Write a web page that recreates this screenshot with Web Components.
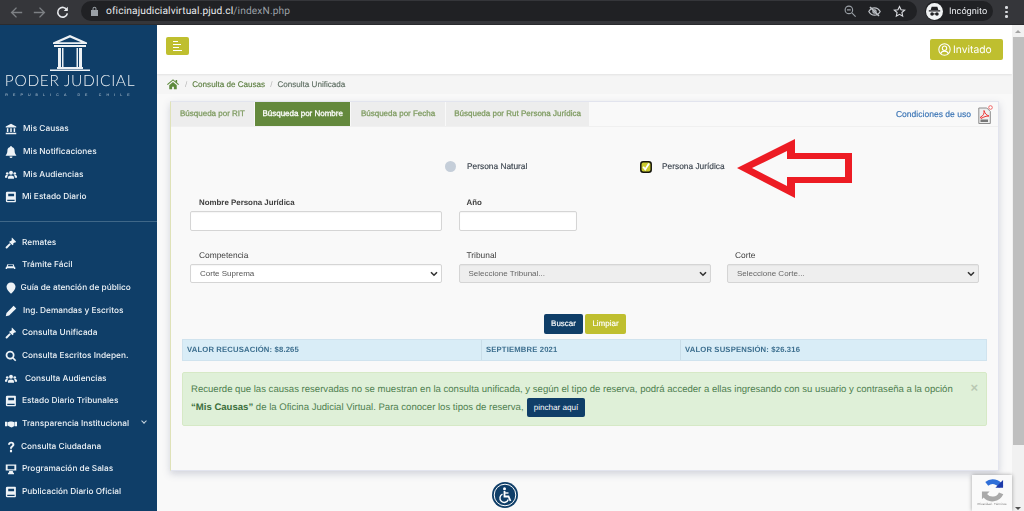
<!DOCTYPE html>
<html lang="es">
<head>
<meta charset="utf-8">
<title>Oficina Judicial Virtual</title>
<style>
  html, body { margin: 0; height: 511px; overflow: hidden; background: #f9f9f9; }
  body { font-family: "Liberation Sans", Arial, sans-serif; text-rendering: geometricPrecision; }
  app-shell { filter: blur(.3px); }
</style>
</head>
<body>
<app-shell>
  <browser-bar slot="top"></browser-bar>
  <side-nav slot="side"></side-nav>
  <top-bar slot="main"></top-bar>
  <crumb-bar slot="main"></crumb-bar>
  <search-card slot="main"></search-card>
  <access-button slot="main"></access-button>
</app-shell>

<script>
(function() {
  'use strict';

  // Small helper so every element gets an open shadow root with its own styles
  class Base extends HTMLElement {
    constructor() {
      super();
      this.attachShadow({ mode: 'open' });
      this.shadowRoot.innerHTML = `<style>${this.css()}</style>${this.html()}`;
    }
    css() { return ':host{display:block}'; }
    html() { return '<slot></slot>'; }
  }

  const ICONS = {
    bank: '<path d="M8 1 1 4.500V6h14V4.500zM2.500 7v5h2V7zm4.500 0v5h2V7zm4.500 0v5h2V7zM1 13v2h14v-2z"/>',
    bell: '<path d="M8 0a1.200 1.200 0 0 0-1.200 1.300C4.400 1.900 3.200 3.800 3.200 6c0 4-1.200 5-2.200 6.200V13h14v-.8C14 11 12.800 10 12.800 6c0-2.200-1.200-4.100-3.600-4.700A1.200 1.200 0 0 0 8 0zM6 14a2 2 0 0 0 4 0z"/>',
    users: '<circle cx="8" cy="5" r="2.600"/><circle cx="3" cy="6" r="1.800"/><circle cx="13" cy="6" r="1.800"/><path d="M4 13v-1.500C4 9.500 5.500 8.500 8 8.500s4 1 4 3V13zM0 11.500V10c0-1.200 1-2 2.600-2 .6 0 1 .1 1.300.3C3.200 9 2.900 10 2.900 11.500zM16 11.500V10c0-1.200-1-2-2.600-2-.6 0-1 .1-1.300.3.700.7 1 1.700 1 3.200z"/>',
    book: '<path d="M3 1h10.500a1 1 0 0 1 1 1v12a1 1 0 0 1-1 1H3a1.800 1.800 0 0 1-1.800-1.800V2.800A1.800 1.800 0 0 1 3 1zm1.300 2.500v3.500h7.800V3.500zM3 11.800v1.500h9.800v-1.500z" fill-rule="evenodd"/>',
    gavel: '<path d="m9.200.8 5.600 5.600-1.400 1.400-.8-.5-1.800 1.800.6.600-1.400 1.400-4.500-4.500 1.400-1.400.6.600L9.300 4l-.5-.8zM6 8.200l1.800 1.800-4.700 5a1.300 1.300 0 0 1-1.900-1.900z"/>',
    car: '<path d="M4 9 5 7h6l1 2zM2 10l1.500-4h9L14 10l1 1v2h-2v-1H3v1H1v-2z" fill-rule="evenodd"/>',
    pin: '<path d="M8 .500C4.500.500 2 3 2 6.300c0 3.400 3.200 7 6 9.200 2.800-2.200 6-5.800 6-9.200C14 3 11.500.500 8 .500z"/>',
    pen: '<path d="m11.500 1 3.500 3.500L5.500 14 1 15l1-4.500z"/>',
    search: '<path d="M6.800 1a5.800 5.800 0 1 0 3.300 10.500l3.400 3.500 1.500-1.500-3.400-3.400A5.800 5.800 0 0 0 6.800 1zm0 2.200a3.500 3.500 0 1 1 0 7.100 3.500 3.500 0 0 1 0-7.100z" fill-rule="evenodd"/>',
    shake: '<path d="M0 5h3v6H0zM13 5h3v6h-3zM3.500 5.500 6.500 4.500h3l3 1v5l-3.500 2-2-.5-3.500-2z"/>',
    help: '<path d="M4 5c0-2.500 2-4 4.300-4C10.800 1 12.500 2.500 12.500 4.700c0 1.800-1 2.600-2.200 3.500-.8.600-1 1-1 2H6.700c0-1.800.5-2.600 1.700-3.500.9-.7 1.400-1.100 1.400-2 0-.9-.7-1.400-1.500-1.400-1 0-1.600.7-1.600 1.700zM6.600 11.500h2.800V15H6.600z"/>',
    screen: '<path d="M1 2h14v8H1zm2.500 1.800v4.500h9V3.800zM5.500 10.500h5V12l1.500 1.500V15H4v-1.500L5.500 12z" fill-rule="evenodd"/>',
    home: '<path d="M8 1.500 0 8.300l1 1.100 7-6 7 6 1-1.100-2.500-2.100V2.500h-2v2zM3 9.700V15h3.800v-3.500h2.400V15H13V9.700L8 5.400z"/>'
  };
  const icon = (name, size) => `<svg width="${size}" height="${size}" viewBox="0 0 16 16" fill="currentColor" aria-hidden="true">${ICONS[name]}</svg>`;

  class AppShell extends Base {
    css() { return `
      :host { display: grid; grid-template: 25px 486px / 157px 855px 12px; width: 1024px; height: 511px; overflow: hidden; position: relative; }
      .top { grid-column: 1 / -1; }
      .main { display: flex; flex-direction: column; overflow: hidden; background: #f9f9f9; }
      .scroll { background: #f1f1f1; display: flex; flex-direction: column; align-items: center; }
      .scroll i { display: block; flex: none; }
      .up { width: 0; height: 0; margin: 5px 0 4px; border: 3px solid transparent; border-top: 0; border-bottom: 3px solid #a3a3a3; }
      .thumb { width: 100%; height: 408px; background: #bfbfbf; margin-left: 1px; }
      .down { width: 0; height: 0; margin-top: auto; margin-bottom: 1px; border: 3px solid transparent; border-bottom: 0; border-top: 3px solid #505050; }
      recaptcha-badge { position: absolute; left: 972px; top: 475px; }
    `; }
    html() { return `
      <div class="top"><slot name="top"></slot></div>
      <slot name="side"></slot>
      <div class="main"><slot name="main"></slot></div>
      <div class="scroll"><i class="up"></i><i class="thumb"></i><i class="down"></i></div>
      <recaptcha-badge></recaptcha-badge>
    `; }
  }

  class BrowserBar extends Base {
    css() { return `
      :host { display: flex; align-items: center; height: 25px; box-sizing: border-box; background: #35363a; border-bottom: 1px solid #2a2b2e; font: 10px "Roboto", sans-serif; color: #e8eaed; }
      svg { display: block; flex: none; }
      .nav { display: flex; align-items: center; gap: 10px; padding-left: 10px; width: 71px; }
      .omni { flex: none; width: 836px; height: 20px; margin-top: -2px; background: #202124; border-radius: 10px; display: flex; align-items: center; box-sizing: border-box; padding-left: 9px; }
      .url { margin-left: 7px; font-size: 10.200px; letter-spacing: .12px; }
      .url span { color: #9aa0a6; }
      .tools { margin-left: auto; display: flex; align-items: center; gap: 12px; padding-right: 11px; }
      .who { display: flex; align-items: center; gap: 6px; margin-left: 8px; font-size: 9.200px; height: 20px; margin-top: -2px; background: #202124; border-radius: 10px; width: 68px; box-sizing: border-box; padding-left: 1px; }
      .face { width: 17px; height: 17px; border-radius: 50%; background: #f1f3f4; display: flex; align-items: center; justify-content: center; color: #202124; }
      .menu { margin-left: 12px; display: flex; flex-direction: column; gap: 2px; }
      .menu i { width: 2.500px; height: 2.500px; border-radius: 50%; background: #dadce0; display: block; }
    `; }
    html() { return `
      <div class="nav">
        <svg width="13" height="13" viewBox="0 0 16 16" fill="none" stroke="#7d8084" stroke-width="1.700"><path d="M15 8H2M8 2 2 8l6 6"/></svg>
        <svg width="13" height="13" viewBox="0 0 16 16" fill="none" stroke="#7d8084" stroke-width="1.700"><path d="M1 8h13M8 2l6 6-6 6"/></svg>
        <svg width="13" height="13" viewBox="0 0 16 16" fill="none" stroke="#e8eaed" stroke-width="2"><path d="M13.500 5A6 6 0 1 0 14 9"/><path d="M14.500 1v5h-5" fill="#e8eaed" stroke="none"/></svg>
      </div>
      <div class="omni">
        <svg width="9" height="10" viewBox="0 0 9 10" fill="#9aa0a6"><path d="M1 4h7v6H1zM2.500 4V2.700a2 2 0 0 1 4 0V4H5.500V2.700a1 1 0 0 0-2 0V4z"/></svg>
        <div class="url">oficinajudicialvirtual.pjud.cl<span>/indexN.php</span></div>
        <div class="tools">
          <svg width="12" height="12" viewBox="0 0 16 16" fill="none" stroke="#9aa0a6" stroke-width="1.500"><circle cx="6.500" cy="6.500" r="5"/><path d="m10.500 10.500 5 5M4 6.500h5"/></svg>
          <svg width="13" height="13" viewBox="0 0 16 16" fill="none" stroke="#bdc1c6" stroke-width="1.500"><path d="M1 8s2.500-4.500 7-4.500S15 8 15 8s-2.500 4.500-7 4.500S1 8 1 8z"/><circle cx="8" cy="8" r="2"/><path d="m2.500 2.500 11 11" stroke-width="2"/></svg>
          <svg width="13" height="13" viewBox="0 0 16 16" fill="none" stroke="#dadce0" stroke-width="1.400"><path d="m8 1.800 1.900 4 4.400.5-3.300 3 .9 4.400L8 11.500l-3.900 2.200.9-4.400-3.300-3 4.400-.5z"/></svg>
        </div>
      </div>
      <div class="who">
        <span class="face"><svg width="13" height="13" viewBox="0 0 16 16" fill="currentColor"><path d="M4.500 2h7l1.200 4H3.300zM1 6.500h14V8H1z"/><circle cx="5" cy="11" r="2.200"/><circle cx="11" cy="11" r="2.200"/><path d="M6 10.500h4v1H6z"/></svg></span>
        <span>Incógnito</span>
      </div>
      <div class="menu"><i></i><i></i><i></i></div>
    `; }
  }

  class NavItem extends Base {
    connectedCallback() {
      const name = this.getAttribute('icon');
      const size = this.getAttribute('size') || 12;
      const box = this.shadowRoot.querySelector('.ico');
      box.innerHTML = icon(name, size);
      box.style.width = (this.getAttribute('gap') || 23) - 5 + 'px';
      if (this.hasAttribute('more')) this.shadowRoot.querySelector('.more').style.display = 'block';
    }
    css() { return `
      :host { display: flex; align-items: center; height: 22.700px; padding-left: 5px; color: #eef3f7; font: 500 8.300px "Inter", "Open Sans", sans-serif; white-space: nowrap; position: relative; }
      .ico { display: flex; flex: none; }
      svg { display: block; }
      .more { display: none; position: absolute; left: 142px; top: 6px; width: 3px; height: 3px; border: solid #c9d6e0; border-width: 0 1px 1px 0; transform: rotate(45deg); }
    `; }
    html() { return `<span class="ico"></span><slot></slot><span class="more"></span>`; }
  }

  class SideNav extends Base {
    css() { return `
      :host { display: block; background: #0f3e68; height: 486px; overflow: hidden; color: #fff; }
      .logo { display: flex; flex-direction: column; align-items: center; height: 90px; box-sizing: border-box; padding: 10px 17px 0 0; }
      svg { display: block; }
      .name { font: 300 15.500px "Lato", sans-serif; letter-spacing: .65px; line-height: 16px; margin-top: 2px; color: #eef2f5; white-space: nowrap; }
      .sub { font: 3.600px "Liberation Sans", sans-serif; letter-spacing: 5.100px; line-height: 5px; color: #c5d2dd; white-space: nowrap; margin-top: 4px; }
      .group { padding-top: 3px; }
      hr { margin: 12px 0 9.500px; border: 0; border-top: 1px solid #3f6788; }
    `; }
    html() { return `
      <div class="logo">
        <svg width="40" height="36" viewBox="0 0 40 36" fill="#eef2f5">
          <path d="M20 0 3 7.500V9h34V7.500zM20 2.400 31 7.200H9z" fill-rule="evenodd"/>
          <path d="M4 10h32v2H4z"/>
          <path d="M8 13h3v19H8zM12 13h1.500v19H12zM26.500 13H28v19h-1.500zM29 13h3v19h-3z"/>
          <path d="M7 32h26v2H7zM0 34.500h40V36H0z"/>
        </svg>
        <div class="name">PODER JUDICIAL</div>
        <div class="sub">REPUBLICA DE CHILE</div>
      </div>
      <div class="group">
        <nav-item icon="bank" gap="23">Mis Causas</nav-item>
        <nav-item icon="bell" gap="23">Mis Notificaciones</nav-item>
        <nav-item icon="users" gap="23">Mis Audiencias</nav-item>
        <nav-item icon="book" gap="22">Mi Estado Diario</nav-item>
      </div>
      <hr>
      <div>
        <nav-item icon="gavel" gap="22">Remates</nav-item>
        <nav-item icon="car" gap="22" size="11">Trámite Fácil</nav-item>
        <nav-item icon="pin" gap="20.500">Guía de atención de público</nav-item>
        <nav-item icon="pen" gap="23">Ing. Demandas y Escritos</nav-item>
        <nav-item icon="gavel" gap="22">Consulta Unificada</nav-item>
        <nav-item icon="search" gap="22">Consulta Escritos Indepen.</nav-item>
        <nav-item icon="users" gap="25">Consulta Audiencias</nav-item>
        <nav-item icon="book" gap="22">Estado Diario Tribunales</nav-item>
        <nav-item icon="shake" gap="22" more>Transparencia Institucional</nav-item>
        <nav-item icon="help" gap="21">Consulta Ciudadana</nav-item>
        <nav-item icon="screen" gap="22">Programación de Salas</nav-item>
        <nav-item icon="book" gap="22">Publicación Diario Oficial</nav-item>
      </div>
    `; }
  }

  class TopBar extends Base {
    css() { return `
      :host { display: flex; flex: none; justify-content: space-between; height: 49px; box-sizing: border-box; padding: 12px 9px 0 9px; background: #fff; box-shadow: 0 1px 2px rgba(0,0,0,.08); position: relative; }
      .toggle { width: 23px; height: 18px; border-radius: 2px; background: #bfbf2f; display: flex; flex-direction: column; gap: 1.500px; justify-content: center; padding-left: 7px; box-sizing: border-box; }
      .toggle i { display: block; height: 1.500px; background: #fff; }
      .user { width: 73px; height: 21px; margin-top: 2px; border-radius: 2px; background: #bfbf2f; color: #fff; font: 400 10.300px "Inter", sans-serif; display: flex; align-items: center; box-sizing: border-box; padding-left: 8px; gap: 2px; }
      svg { display: block; }
    `; }
    html() { return `
      <div class="toggle"><i style="width:5px"></i><i style="width:8px"></i><i style="width:6px"></i><i style="width:9px"></i></div>
      <div class="user">
        <svg width="13" height="13" viewBox="0 0 16 16" fill="none" stroke="#fff" stroke-width="1.300"><circle cx="8" cy="8" r="7"/><circle cx="8" cy="6.500" r="2.700"/><path d="M3.500 13c.5-2 2-3 4.500-3s4 1 4.500 3"/></svg>
        <span>Invitado</span>
      </div>
    `; }
  }

  class CrumbBar extends Base {
    css() { return `
      :host { display: flex; flex: none; align-items: center; height: 20px; box-sizing: border-box; padding: 0 0 0 10px; background: #f5f5f5; font: 8.100px "Liberation Sans", sans-serif; color: #6f7f63; white-space: nowrap; -webkit-text-stroke: .15px currentColor; }
      svg { display: block; color: #5d8a3c; }
      .sep { color: #b5b5b5; margin: 0 5px; -webkit-text-stroke: 0; }
      a { color: #5a7d3e; }
      b { font-weight: 400; color: #5e6e62; }
    `; }
    html() { return `${icon('home', 12)}<span class="sep" style="margin:0 5px 0 6px">/</span><a>Consulta de Causas</a><span class="sep">/</span><b>Consulta Unificada</b>`; }
  }

  class TabItem extends Base {
    css() { return `
      :host { display: flex; align-items: center; box-sizing: border-box; padding: 0 var(--pad, 9.500px) 1px; height: 24px; background: #ededed; color: #7d9a5f; font: 8px "Liberation Sans", sans-serif; white-space: nowrap; -webkit-text-stroke: .25px currentColor; }
      :host([active]) { background: #64893d; color: #fff; -webkit-text-stroke: .3px currentColor; }
    `; }
  }

  class FormField extends Base {
    css() { return `
      :host { display: block; color: #3e3e3e; }
      label { display: block; font: 8.400px/11px "Liberation Sans", sans-serif; padding-left: var(--label-pad, 8px); margin: -1px 0 3px; }
      :host([strong]) label { font-weight: 700; font-size: 7.900px; }
      ::slotted(*) { display: block; }
    `; }
    html() { return `<label>${this.getAttribute('label') || ''}</label><slot></slot>`; }
  }

  class RadioChoice extends Base {
    css() { return `
      :host { display: flex; align-items: center; font: 8.350px "Liberation Sans", sans-serif; color: #3d4650; -webkit-text-stroke: .15px currentColor; white-space: nowrap; }
      .dot { width: 11px; height: 11px; border-radius: 50%; background: #c5ced9; margin-right: 11px; flex: none; }
      .chk { width: 12px; height: 12px; margin: 0 10px 0 -1px; flex: none; display: block; }
      span.t { margin-top: -1px; }
    `; }
    html() {
      const mark = this.hasAttribute('checked')
        ? '<svg class="chk" viewBox="0 0 12 12"><rect x=".8" y=".8" width="10.400" height="10.400" rx="2.500" fill="#c9c92c" stroke="#14140c" stroke-width="1.500"/><path d="M3.200 5.800 5.200 8.500 9 2.500" fill="none" stroke="#fff" stroke-width="1.800"/></svg>'
        : '<span class="dot"></span>';
      return mark + '<span class="t"><slot></slot></span>';
    }
  }

  class InfoStrip extends Base {
    css() { return `
      :host { display: grid; grid-template-columns: 299px 199px 1fr; height: 22px; box-sizing: border-box; background: #d9edf7; border: 1px solid #d0e3ee; color: #3d6f8f; font: 700 7.700px/20px "Liberation Sans", sans-serif; letter-spacing: .15px; }
      span { padding-left: 4px; border-right: 1px solid #c9dde8; white-space: nowrap; }
      span:last-child { border-right: 0; }
    `; }
    html() { return `<span>VALOR RECUSACIÓN: $8.265</span><span>SEPTIEMBRE 2021</span><span>VALOR SUSPENSIÓN: $26.316</span>`; }
  }

  class NoticeBox extends Base {
    css() { return `
      :host { display: block; position: relative; height: 54px; box-sizing: border-box; padding: 7.500px 8px 0; background: #dff0d8; border: 1px solid #d6e9c6; border-radius: 2px; color: #4f8050; font: 9.570px/17px "Liberation Sans", sans-serif; white-space: nowrap; }
      b { color: #3c6e3c; }
      .go { display: inline-block; background: #0f3e68; color: #fff; font-size: 8.100px; line-height: 19px; height: 19px; padding: 0 6.500px; border-radius: 2px; vertical-align: middle; margin-left: 1px; }
      .close { position: absolute; right: 8px; top: 7px; font: 700 13px/15px "Liberation Sans", sans-serif; color: #b9c8b3; }
    `; }
    html() { return `Recuerde que las causas reservadas no se muestran en la consulta unificada, y según el tipo de reserva, podrá acceder a ellas ingresando con su usuario y contraseña a la opción<br><b>“Mis Causas”</b> de la Oficina Judicial Virtual. Para conocer los tipos de reserva, <span class="go">pinchar aquí</span><span class="close">×</span>`; }
  }

  const CHEVRON = "url(\"data:image/svg+xml,%3Csvg xmlns='http://www.w3.org/2000/svg' width='8' height='6' viewBox='0 0 8 6'%3E%3Cpath d='M1 1.200 4 4.200 7 1.200' fill='none' stroke='%23333' stroke-width='1.600'/%3E%3C/svg%3E\")";

  class SearchCard extends Base {
    css() { return `
      :host { display: block; position: relative; flex: none; box-sizing: border-box; height: 370px; margin: 7px 13px 0; background: #f9f9f9; border: 1px solid #e2e4ee; border-left-color: #dfe2b8; box-shadow: 0 3px 7px rgba(90,100,130,.25); }
      .tabs { display: flex; gap: 1px; height: 24px; align-items: stretch; padding-right: 5px; border-bottom: 1px solid #f0f0f0; box-sizing: content-box; }
      .terms { margin-left: auto; align-self: center; display: flex; align-items: center; gap: 7px; font: 8.550px "Liberation Sans", sans-serif; color: #3a74b5; -webkit-text-stroke: .15px currentColor; white-space: nowrap; }
      .terms span { margin-top: -1px; }
      .terms svg { display: block; margin-top: 1px; }
      .who { display: flex; padding: 34px 0 0 274px; height: 11px; align-items: center; }
      .who radio-choice:first-child { width: 196px; }
      .grid { display: grid; grid-template-columns: 252px 252px 252px; column-gap: 16.500px; padding: 26px 0 0 19px; }
      .row2 { margin-top: 20px; }
      input, select { box-sizing: border-box; width: 100%; height: 20px; margin: 0; border: 1px solid #d5d5d5; border-radius: 2px; background: #fff; font: 8px "Liberation Sans", sans-serif; color: #555; padding: 0 5px; box-shadow: inset 0 1px 1px rgba(0,0,0,.04); outline: 0; }
      select { height: 19px; appearance: none; -webkit-appearance: none; padding-left: 9px; background: #fff ${CHEVRON} no-repeat right 3px center; }
      select:disabled { background-color: #eee; opacity: 1; color: #666; }
      .narrow { width: 118px; }
      .actions { display: flex; justify-content: flex-start; gap: 2px; padding: 31px 0 0 373px; }
      .btn { height: 20px; border-radius: 2px; color: #fff; font: 8px/20px "Liberation Sans", sans-serif; text-align: center; -webkit-text-stroke: .15px currentColor; }
      .go { width: 39px; background: #0f3e68; }
      .clear { width: 41px; background: #bfbf2f; }
      info-strip { margin: 5px 11px 0; }
      notice-box { margin: 11px 11px 0; }
    `; }
    html() { return `
      <div class="tabs">
        <tab-item style="--pad:9px">Búsqueda por RIT</tab-item>
        <tab-item active style="--pad:7.500px">Búsqueda por Nombre</tab-item>
        <tab-item style="--pad:9.500px">Búsqueda por Fecha</tab-item>
        <tab-item style="--pad:8.500px">Búsqueda por Rut Persona Jurídica</tab-item>
        <div class="terms">
          <span>Condiciones de uso</span>
          <svg width="15" height="19" viewBox="0 0 15 19"><path d="M.8 3h8l3.500 3.500v12H.8z" fill="#eee" stroke="#8c8c8c"/><path d="M2.500 12c3-1 4-4 3.500-6.500 1 3 2 4.500 5 5.500-3 0-5 .8-8 2.500z" fill="none" stroke="#e33" stroke-width="1"/><rect x="2.500" y="14.500" width="7.500" height="2.500" fill="#777"/><circle cx="12.500" cy="2.500" r="1.800" fill="#fff" stroke="#e66" stroke-width="1"/></svg>
        </div>
      </div>
      <div class="who">
        <radio-choice>Persona Natural</radio-choice>
        <radio-choice checked>Persona Jurídica</radio-choice>
      </div>
      <div class="grid">
        <form-field label="Nombre Persona Jurídica" strong style="--label-pad:9px"><input type="text"></form-field>
        <form-field label="Año" strong><input class="narrow" type="text"></form-field>
      </div>
      <div class="grid row2" style="padding-top:0">
        <form-field label="Competencia" style="--label-pad:9px"><select><option>Corte Suprema</option></select></form-field>
        <form-field label="Tribunal"><select disabled><option>Seleccione Tribunal...</option></select></form-field>
        <form-field label="Corte"><select disabled><option>Seleccione Corte...</option></select></form-field>
      </div>
      <div class="actions"><div class="btn go">Buscar</div><div class="btn clear">Limpiar</div></div>
      <info-strip></info-strip>
      <notice-box></notice-box>
      <red-arrow></red-arrow>
    `; }
  }

  // Annotation painted over the card, so it sits on its own coordinates
  class RedArrow extends Base {
    css() { return `:host { position: absolute; left: 566px; top: 36px; } svg { display: block; }`; }
    html() { return `<svg width="116" height="62" viewBox="737 138 116 62"><path fill-rule="evenodd" fill="#ed1c24" d="M737 168 795 139v14h57v30h-57v15zM752 168l35 18v-9h58v-18h-58v-8z"/></svg>`; }
  }

  class AccessButton extends Base {
    css() { return `:host { display: block; flex: none; margin: 11px 0 0 335px; width: 26px; height: 26px; } svg { display: block; }`; }
    html() { return `<svg width="26" height="26" viewBox="0 0 26 26"><circle cx="13" cy="13" r="13" fill="#0f3e68"/><circle cx="13" cy="13" r="10.800" fill="none" stroke="#fff" stroke-width="1"/><circle cx="12.500" cy="6.800" r="1.500" fill="#fff"/><path d="M12.500 9v5.500h4l2 4.500" fill="none" stroke="#fff" stroke-width="1.800"/><path d="M12.500 11h4" stroke="#fff" stroke-width="1.400"/><path d="M10.500 12.200a4.300 4.300 0 1 0 5.800 5.300" fill="none" stroke="#fff" stroke-width="1.400"/></svg>`; }
  }

  class RecaptchaBadge extends Base {
    css() { return `
      :host { display: flex; flex-direction: column; align-items: center; box-sizing: border-box; width: 40px; height: 36px; padding-top: 4px; background: #fafafa; box-shadow: 0 0 4px rgba(0,0,0,.35); color: #777; font: 3px/4px "Liberation Sans", sans-serif; white-space: nowrap; }
      svg { display: block; }
    `; }
    html() { return `<svg width="23" height="23" viewBox="0 0 24 24" fill="none"><path d="M6 5A10 10 0 0 1 21 8" stroke="#2f6fd8" stroke-width="5"/><path d="M15 9h8V1z" fill="#1c3aa9"/><path d="M21 15a10 10 0 0 1-17 2" stroke="#a9a9a9" stroke-width="5"/><path d="M1 13h8l-8 8z" fill="#a9a9a9"/></svg><span>Privacidad · Términos</span>`; }
  }

  const defs = { 'app-shell': AppShell, 'browser-bar': BrowserBar, 'nav-item': NavItem, 'side-nav': SideNav, 'top-bar': TopBar, 'crumb-bar': CrumbBar, 'tab-item': TabItem, 'form-field': FormField, 'radio-choice': RadioChoice, 'info-strip': InfoStrip, 'notice-box': NoticeBox, 'search-card': SearchCard, 'red-arrow': RedArrow, 'access-button': AccessButton, 'recaptcha-badge': RecaptchaBadge };
  Object.keys(defs).forEach((k) => customElements.define(k, defs[k]));
})();
</script>
</body>
</html>
